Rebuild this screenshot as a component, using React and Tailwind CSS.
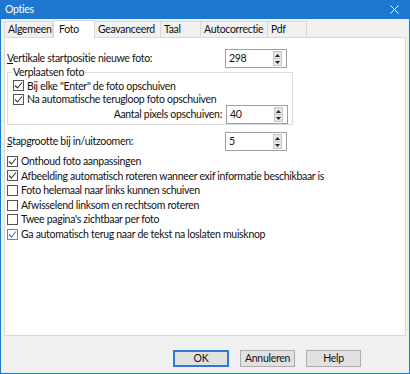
import React from "react";

const font = { fontFamily: 'Lato, "Liberation Sans", sans-serif' };

function Check({ checked, hover }) {
  return (
    <span
      className={`w-[11px] h-[11px] shrink-0 border bg-white flex items-center justify-center ${
        hover ? "border-[#3c8ee0]" : "border-[#555]"
      }`}
    >
      {checked && (
        <svg width="9" height="9" viewBox="0 0 9 9">
          <path
            d="M1 4.5 L3.5 7 L8 1.5"
            fill="none"
            stroke={hover ? "#2a78cf" : "#333"}
            strokeWidth="1.1"
          />
        </svg>
      )}
    </span>
  );
}

function CheckRow({ label, checked, hover }) {
  return (
    <div className="flex items-center gap-[3px] h-[14.6px]">
      <Check checked={checked} hover={hover} />
      <span className="whitespace-nowrap">{label}</span>
    </div>
  );
}

function Spin({ value }) {
  return (
    <div className="w-[62px] h-[19px] border border-[#a0a0a0] bg-white flex items-center justify-between pl-[3px] pr-[4px]">
      <span>{value}</span>
      <div className="w-[9px] h-[15px] flex flex-col bg-[#e6e6e6] border border-[#c8c8c8]">
        <div className="flex-1 flex items-center justify-center border-b border-[#c8c8c8]">
          <svg width="5" height="3" viewBox="0 0 5 3">
            <path d="M0 3 L2.5 0 L5 3 Z" fill="#222" />
          </svg>
        </div>
        <div className="flex-1 flex items-center justify-center">
          <svg width="5" height="3" viewBox="0 0 5 3">
            <path d="M0 0 L2.5 3 L5 0 Z" fill="#222" />
          </svg>
        </div>
      </div>
    </div>
  );
}

const tabs = [
  ["Algemeen", "w-[49px]"],
  ["Foto", "w-[42px]"],
  ["Geavanceerd", "w-[66px]"],
  ["Taal", "w-[40px]"],
  ["Autocorrectie", "w-[67px]"],
  ["Pdf", "w-[39px]"],
];

export default function App() {
  return (
    <div
      className="w-[410px] h-[374px] bg-[#f0f0f0] border-x border-b border-[#1f78cf] flex flex-col text-[10.5px] tracking-[-0.3px] text-[#111] leading-none"
      style={font}
    >
      <div className="h-[19px] bg-[#1f78cf] flex items-center justify-between pl-[4px] pr-[10px] text-white">
        <span>Opties</span>
        <svg width="9" height="9" viewBox="0 0 9 9">
          <path d="M0.5 0.5 L8.5 8.5 M8.5 0.5 L0.5 8.5" stroke="white" strokeWidth="1" />
        </svg>
      </div>

      <div className="flex pl-[3px] h-[17px] mt-[1px] items-end">
        {tabs.map(([t, w]) =>
          t === "Foto" ? (
            <div
              key={t}
              className={`${w} h-[18px] -mb-[1px] bg-white border-x border-t border-[#d9d9d9] pl-[5px] pt-[3px] relative z-10 whitespace-nowrap`}
            >
              {t}
            </div>
          ) : (
            <div
              key={t}
              className={`${w} h-[16px] border-t border-r border-[#d9d9d9] first:border-l flex items-center pl-[3px] whitespace-nowrap`}
            >
              {t}
            </div>
          )
        )}
      </div>

      <div className="mx-[3px] h-[299px] bg-white border border-[#d9d9d9] pl-[2px] pt-[11px] flex flex-col">
        <div className="flex items-center">
          <span className="w-[218px]">
            <span className="underline">V</span>ertikale startpositie nieuwe foto:
          </span>
          <Spin value="298" />
        </div>

        <div className="relative mt-[4px] w-[286px] h-[53px] border border-[#dcdcdc] pl-[5px] pr-[4px] pt-[6px] flex flex-col">
          <span className="absolute -top-[6px] left-[4px] bg-white px-[1px]">Verplaatsen foto</span>
          <CheckRow label={'Bij elke "Enter" de foto opschuiven'} checked />
          <CheckRow label="Na automatische terugloop foto opschuiven" checked />
          <div className="flex items-center justify-end mt-[-1px]">
            <span className="mr-[4px]">Aantal pixels opschuiven:</span>
            <Spin value="40" />
          </div>
        </div>

        <div className="flex items-center mt-[7px]">
          <span className="w-[218px]">
            <span className="underline">S</span>tapgrootte bij in/uitzoomen:
          </span>
          <Spin value="5" />
        </div>

        <div className="flex flex-col mt-[3px]">
          <CheckRow label="Onthoud foto aanpassingen" checked />
          <CheckRow label="Afbeelding automatisch roteren wanneer exif informatie beschikbaar is" checked />
          <CheckRow label="Foto helemaal naar links kunnen schuiven" />
          <CheckRow label="Afwisselend linksom en rechtsom roteren" />
          <CheckRow label="Twee pagina's zichtbaar per foto" />
          <CheckRow label="Ga automatisch terug naar de tekst na loslaten muisknop" checked hover />
        </div>
      </div>

      <div className="flex-1 flex items-center justify-end pr-[48px] pt-[8px] gap-[11px]">
        <button className="w-[56px] h-[17px] bg-[#e1e1e1] border border-[#2b7cd3] outline outline-1 outline-[#2b7cd3] -outline-offset-2">
          OK
        </button>
        <button className="w-[55px] h-[17px] bg-[#e1e1e1] border border-[#adadad]">Annuleren</button>
        <button className="w-[55px] h-[17px] bg-[#e1e1e1] border border-[#adadad]">Help</button>
      </div>
    </div>
  );
}
